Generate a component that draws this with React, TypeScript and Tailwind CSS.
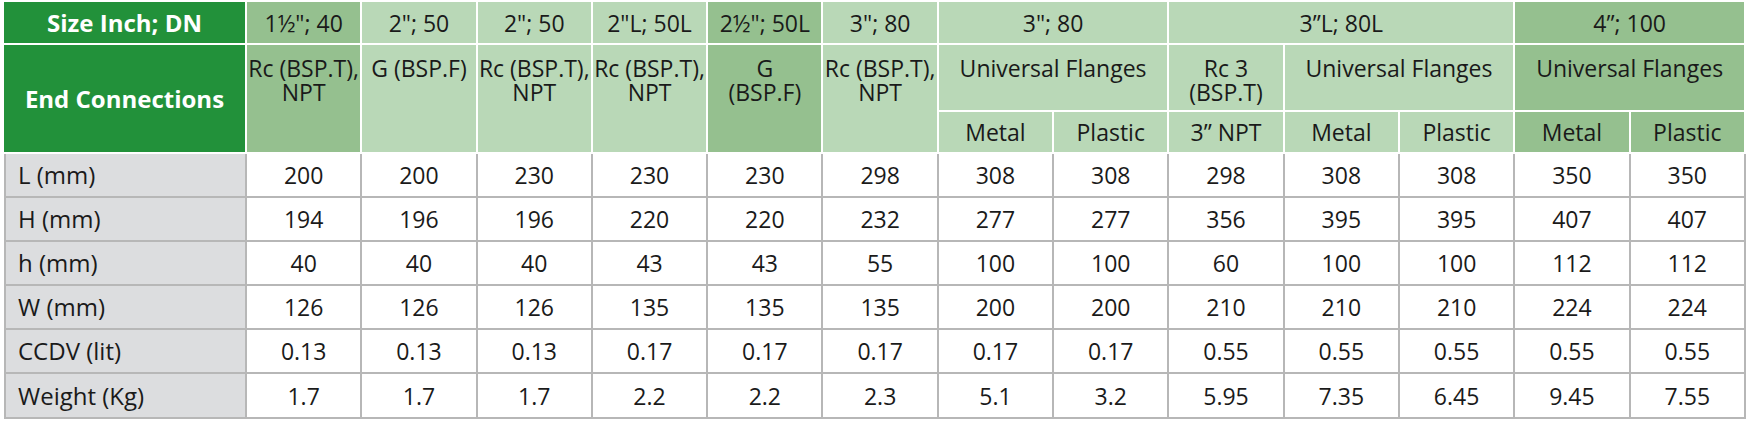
import React from "react";

const DARK = "bg-[#95c08f]";
const LIGHT = "bg-[#b9d8b7]";

const rows: [string, string[]][] = [
  ["L (mm)", ["200", "200", "230", "230", "230", "298", "308", "308", "298", "308", "308", "350", "350"]],
  ["H (mm)", ["194", "196", "196", "220", "220", "232", "277", "277", "356", "395", "395", "407", "407"]],
  ["h (mm)", ["40", "40", "40", "43", "43", "55", "100", "100", "60", "100", "100", "112", "112"]],
  ["W (mm)", ["126", "126", "126", "135", "135", "135", "200", "200", "210", "210", "210", "224", "224"]],
  ["CCDV (lit)", ["0.13", "0.13", "0.13", "0.17", "0.17", "0.17", "0.17", "0.17", "0.55", "0.55", "0.55", "0.55", "0.55"]],
  ["Weight (Kg)", ["1.7", "1.7", "1.7", "2.2", "2.2", "2.3", "5.1", "3.2", "5.95", "7.35", "6.45", "9.45", "7.55"]],
];

const h = "border-r-2 border-b-2 border-white text-center text-[#1a1a1a] p-0";
const top = "align-top pt-[11px]";

export default function App() {
  return (
    <div
      className="bg-white w-[1750px] h-[421px] pt-[2px] pl-[4px]"
      style={{ fontFamily: '"Open Sans", "Noto Sans", sans-serif' }}
    >
      <table className="table-fixed w-[1742px] border-separate border-spacing-0 text-[23px] leading-[24px]">
        <colgroup>
          <col className="w-[243px]" />
          {Array.from({ length: 13 }).map((_, i) => (
            <col key={i} />
          ))}
        </colgroup>
        <thead>
          <tr className="h-[43px]">
            <th className={`${h} bg-[#22913a] text-white font-bold text-[24px]`}>Size Inch; DN</th>
            <td className={`${h} ${DARK}`}>1½"; 40</td>
            <td className={`${h} ${LIGHT}`}>2"; 50</td>
            <td className={`${h} ${LIGHT}`}>2"; 50</td>
            <td className={`${h} ${LIGHT}`}>2"L; 50L</td>
            <td className={`${h} ${DARK}`}>2½"; 50L</td>
            <td className={`${h} ${LIGHT}`}>3"; 80</td>
            <td colSpan={2} className={`${h} ${LIGHT}`}>3"; 80</td>
            <td colSpan={3} className={`${h} ${LIGHT}`}>3”L; 80L</td>
            <td colSpan={2} className={`${h} ${DARK}`}>4”; 100</td>
          </tr>
          <tr className="h-[67px]">
            <th rowSpan={2} className={`${h} bg-[#22913a] text-white font-bold text-[24px]`}>End Connections</th>
            <td rowSpan={2} className={`${h} ${DARK} ${top}`}>Rc (BSP.T),<br />NPT</td>
            <td rowSpan={2} className={`${h} ${LIGHT} ${top}`}>G (BSP.F)</td>
            <td rowSpan={2} className={`${h} ${LIGHT} ${top}`}>Rc (BSP.T),<br />NPT</td>
            <td rowSpan={2} className={`${h} ${LIGHT} ${top}`}>Rc (BSP.T),<br />NPT</td>
            <td rowSpan={2} className={`${h} ${DARK} ${top}`}>G<br />(BSP.F)</td>
            <td rowSpan={2} className={`${h} ${LIGHT} ${top}`}>Rc (BSP.T),<br />NPT</td>
            <td colSpan={2} className={`${h} ${LIGHT} ${top}`}>Universal Flanges</td>
            <td className={`${h} ${LIGHT} ${top}`}>Rc 3<br />(BSP.T)</td>
            <td colSpan={2} className={`${h} ${LIGHT} ${top}`}>Universal Flanges</td>
            <td colSpan={2} className={`${h} ${DARK} ${top}`}>Universal Flanges</td>
          </tr>
          <tr className="h-[42px]">
            <td className={`${h} ${LIGHT}`}>Metal</td>
            <td className={`${h} ${LIGHT}`}>Plastic</td>
            <td className={`${h} ${LIGHT}`}>3” NPT</td>
            <td className={`${h} ${LIGHT}`}>Metal</td>
            <td className={`${h} ${LIGHT}`}>Plastic</td>
            <td className={`${h} ${DARK}`}>Metal</td>
            <td className={`${h} ${DARK}`}>Plastic</td>
          </tr>
        </thead>
        <tbody>
          {rows.map(([label, vals], ri) => (
            <tr key={label} className={ri === rows.length - 1 ? "h-[45px]" : "h-[44px]"}>
              <td className="border-l-2 border-r-2 border-b-2 border-[#b7b7b7] bg-[#dcdddf] text-left pl-[12px] text-[#1a1a1a] p-0 text-[24px]">
                {label}
              </td>
              {vals.map((v, i) => (
                <td
                  key={i}
                  className="border-r-2 border-b-2 border-[#b7b7b7] bg-white text-center text-[#1a1a1a] p-0"
                >
                  {v}
                </td>
              ))}
            </tr>
          ))}
        </tbody>
      </table>
    </div>
  );
}
